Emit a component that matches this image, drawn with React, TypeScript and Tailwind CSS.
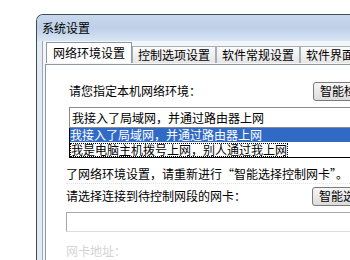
import React from 'react';

const font = { fontFamily: '"Noto Sans CJK SC", "Liberation Sans", sans-serif' };

function Tab({ label, active }: { label: string; active?: boolean }) {
  if (active) {
    return (
      <div className="h-[21px] -mb-px px-[6px] border border-b-0 border-[#8c9aa6] bg-white flex items-center text-[12px] text-black z-10">
        {label}
      </div>
    );
  }
  return (
    <div className="h-[17px] mt-[4px] px-[5px] border border-b-0 border-[#a6aeb6] bg-gradient-to-b from-[#fbfbfb] to-[#e6e6e6] flex items-center text-[12px] text-black">
      {label}
    </div>
  );
}

function Btn({ label }: { label: string }) {
  return (
    <div className="h-[19px] px-[6px] rounded-[3px] border border-[#7a7a7a] bg-gradient-to-b from-[#f6f6f6] to-[#dcdcdc] flex items-center text-[12px] text-black whitespace-nowrap">
      {label}
    </div>
  );
}

export default function App() {
  return (
    <div className="w-[350px] h-[260px] bg-white overflow-hidden pt-[14px] pl-[36px]" style={font}>
      <div className="w-[330px] h-[260px] border-l border-t border-[#3e4c54] rounded-tl-[7px] bg-[#e3ebf4] flex flex-col">
        {/* title bar */}
        <div className="h-[26px] shrink-0 rounded-tl-[6px] bg-gradient-to-b from-[#c9d9ec] via-[#bcd0e8] to-[#d9e6f4] flex items-center pl-[5px] text-[12px] text-black">
          系统设置
        </div>
        <div className="flex-1 flex pl-[5px]">
          <div className="flex-1 border-l border-[#9ca8b4] bg-[#f3f5f8] flex flex-col">
            {/* tabs */}
            <div className="h-[22px] mt-[1px] flex pl-[3px] whitespace-nowrap">
              <Tab label="网络环境设置" active />
              <Tab label="控制选项设置" />
              <Tab label="软件常规设置" />
              <Tab label="软件界面设置" />
            </div>
            <div className="flex-1 bg-white border-t border-l border-[#8c9aa6] ml-[2px] pl-[20px] pt-[16px] text-[12px] text-black whitespace-nowrap">
              <div className="flex items-center h-[20px]">
                <span className="pl-[3px]">请您指定本机网络环境：</span>
                <div className="ml-auto -mr-[39px]">
                  <Btn label="智能检测网络环境" />
                </div>
              </div>
              <div className="mt-[6px] ml-[3px] h-[21px] border border-[#8a8a8a] flex items-center pl-[2px]">
                我接入了局域网，并通过路由器上网
              </div>
              <div className="ml-[3px] border-l border-b border-black">
                <div className="h-[14px] bg-[#316ac5] text-white flex items-center leading-none">
                  我接入了局域网，并通过路由器上网
                </div>
                <div className="h-[15px] flex items-center leading-none">
                  <span className="border border-black border-dotted leading-[12px]">我是电脑主机拨号上网，别人通过我上网</span>
                </div>
              </div>
              <div className="mt-[8px] h-[16px] flex items-center">
                了网络环境设置，请重新进行“智能选择控制网卡”。
              </div>
              <div className="h-[3px] mt-[1px] border-t border-dotted border-[#e4e4e4]" />
              <div className="flex items-center h-[20px]">
                <span>请选择连接到待控制网段的网卡：</span>
                <div className="ml-auto -mr-[38px]">
                  <Btn label="智能选择控制网卡" />
                </div>
              </div>
              <div className="mt-[6px] h-[20px] border border-[#a8a8a8] border-b-[#dcdcdc] border-r-0" />
              <div className="mt-[10px] text-[#d4d4d4]">网卡地址：</div>
            </div>
          </div>
        </div>
      </div>
    </div>
  );
}
